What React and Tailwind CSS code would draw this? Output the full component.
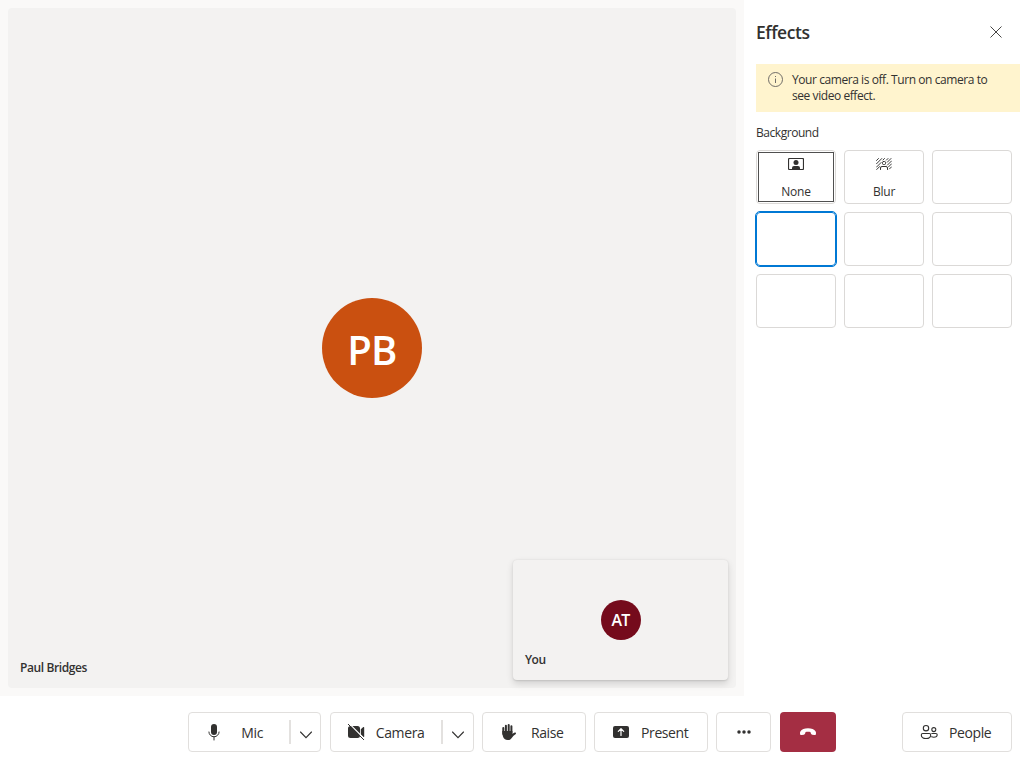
import React from "react";

function Icon({ className = "", children, size = 20 }) {
  return (
    <svg width={size} height={size} viewBox="0 0 20 20" fill="none" className={`block shrink-0 ${className}`}>
      {children}
    </svg>
  );
}

const MicIcon = () => (
  <Icon>
    <rect x="7" y="2" width="6" height="11" rx="3" fill="currentColor" />
    <path d="M4.9 10a5.1 4.8 0 0 0 10.2 0M10 14.8V18" stroke="currentColor" strokeWidth="1" strokeLinecap="round" />
  </Icon>
);

const CameraOffIcon = () => (
  <Icon>
    <path d="M4.500 4H11.500a2.500 2.500 0 0 1 2.500 2.500v7a2.500 2.500 0 0 1-2.500 2.500h-7A2.500 2.500 0 0 1 2 13.500v-7A2.500 2.500 0 0 1 4.500 4ZM14.800 7.200l2.500-2.100c.4-.3.900 0 .900.400v9c0 .5-.5.700-.9.400l-2.500-2.100Z" fill="currentColor" />
    <path d="M3.300 1.700 18.600 17" stroke="white" strokeWidth="1.100" />
    <path d="M2.300 2.300 17.700 17.700" stroke="currentColor" strokeWidth="1" strokeLinecap="round" />
  </Icon>
);

const HandIcon = () => (
  <Icon>
    <path d="M4.300 12V6M6.900 10.500V3.700M9.700 10V2.900M12.400 10.500V4.200" stroke="currentColor" strokeWidth="2" strokeLinecap="round" />
    <path d="M3.300 9h10.100v2.700l1.900-1c.7-.3 1.400-.1 1.600.3.200.5 0 1-.4 1.300l-2 1.500-2 2.400c-1 1.300-2 1.900-3.800 1.900-2.600 0-4-1.500-4.700-3.600-.4-1.300-.6-2.800-.7-5.500Z" fill="currentColor" />
  </Icon>
);

const PresentIcon = () => (
  <Icon>
    <rect x="2" y="4" width="16" height="12" rx="2" fill="currentColor" />
    <path d="M10 13.500V7M7.300 9.300 10 6.600l2.700 2.700" stroke="white" strokeWidth="1.200" strokeLinecap="round" strokeLinejoin="round" />
  </Icon>
);

const PeopleIcon = () => (
  <Icon>
    <g stroke="currentColor" strokeWidth="1.100">
      <circle cx="7" cy="6.200" r="2.700" />
      <circle cx="14.800" cy="7.600" r="2" />
      <path d="M3.700 11.500h6.600c.8 0 1.400.6 1.400 1.400 0 2-1.700 3.600-4.700 3.600s-4.700-1.600-4.700-3.600c0-.8.600-1.400 1.400-1.400Z" />
      <path d="M12.800 11.500h4c.8 0 1.400.6 1.400 1.300 0 1.300-1.200 2.400-3.400 2.400-.9 0-1.600-.1-2.200-.4" strokeLinecap="round" />
    </g>
  </Icon>
);

const NoneIcon = () => (
  <svg width="16" height="12" viewBox="0 0 16 12" fill="none" className="block">
    <rect x=".5" y=".5" width="15" height="11" rx="1" stroke="currentColor" strokeWidth="1.200" />
    <circle cx="8" cy="4.500" r="2.500" fill="currentColor" />
    <path d="M4 11.500V10a2 2 0 0 1 2-2h4a2 2 0 0 1 2 2v1.500Z" fill="currentColor" />
  </svg>
);

const BlurIcon = () => (
  <svg width="16" height="12" viewBox="0 0 16 12" fill="none" stroke="currentColor" strokeLinecap="round" className="block">
    <path d="M.5 2.500 2.500.5M.5 5.800l5.300-5.300M.5 9.100l4.600-4.600M.7 11.500l3-3M7 2 8.500.5M10.400 2.100 12 .5M11.300 4.200 15 .5M11.500 7l4-4M12.500 8.900l3-3M13.500 10.900l2-2" strokeWidth=".95" />
    <rect x="6.500" y="3.500" width="3" height="3" rx="1" strokeWidth="1" />
    <path d="M4.500 11.500V10a1.500 1.500 0 0 1 1.500-1.500h4a1.500 1.500 0 0 1 1.500 1.500v1.500" strokeWidth="1" />
  </svg>
);

const Chevron = () => (
  <svg width="12" height="8" viewBox="0 0 12 8" fill="none" className="block">
    <path d="M.5 1 6 6.700 11.500 1" stroke="currentColor" strokeWidth="1.100" strokeLinecap="round" />
  </svg>
);

function SplitButton({ icon, label, width, labelWidth }) {
  return (
    <div className={`flex h-10 rounded-[4px] border border-[#e1dfdd] bg-white ${width}`}>
      <button className="flex flex-1 items-center pl-[15px]">
        {icon}
        <span className={`text-center ${labelWidth}`}>{label}</span>
      </button>
      <span className="mt-[7px] h-6 w-[2px] bg-[#e3e1df]" />
      <button className="flex w-[29.500px] items-center justify-center pt-[5px] pl-px">
        <Chevron />
      </button>
    </div>
  );
}

function ToolButton({ icon, label, className }) {
  return (
    <button className={`flex h-10 items-center rounded-[4px] border border-[#e1dfdd] bg-white ${className}`}>
      {icon}
      <span>{label}</span>
    </button>
  );
}

function EffectTile({ icon, label, selected, focused }) {
  return (
    <button className={`flex h-[54px] flex-col items-center rounded-[4px] border bg-white ${selected ? "border-[#0078d4] outline-1 outline-[#0078d4]" : "border-[#dbd9d7]"}`}>
      {label && (
        <span className={`flex flex-col items-center ${focused ? "m-px h-[50px] w-[76px] border border-[#505050] pt-[5px]" : "pt-[7px]"}`}>
          {icon}
          <span className="mt-[14px] text-[12px] leading-4 tracking-[-0.200px]">{label}</span>
        </span>
      )}
    </button>
  );
}

export default function App() {
  return (
    <div className="flex h-[768px] w-[1024px] flex-col overflow-hidden bg-white font-['Open_Sans','Noto_Sans',sans-serif] text-[#323130]">
      <div className="flex h-[696px]">
        <main className="w-[744px] bg-[#faf9f8] p-2">
          <section className="relative flex h-[680px] items-center justify-center rounded-[4px] bg-[#f3f2f1]">
            <div className="flex size-[100px] items-center justify-center rounded-full bg-[#ca5010] pt-1 text-[40px] font-semibold tracking-[-0.700px] text-white">PB</div>
            <span className="absolute bottom-3 left-3 text-[12px] leading-4 font-semibold tracking-[-0.400px]">Paul Bridges</span>
            <div className="absolute right-2 bottom-2 flex h-[120px] w-[215px] items-center justify-center rounded-[4px] bg-[#f3f2f1] shadow-[0_3.200px_7.200px_rgba(0,0,0,0.13),0_0.600px_1.800px_rgba(0,0,0,0.11)]">
              <div className="flex size-10 items-center justify-center rounded-full bg-[#750b1c] pb-px text-[16px] font-semibold tracking-[-0.700px] text-white">AT</div>
              <span className="absolute bottom-3 left-3 text-[12px] leading-4 font-semibold tracking-[-0.500px]">You</span>
            </div>
          </section>
        </main>
        <aside className="flex w-[280px] flex-col pl-3">
          <header className="flex h-16 items-center justify-between pr-[22px]">
            <h1 className="text-[17.500px] leading-6 font-semibold tracking-[-0.450px]">Effects</h1>
            <svg width="12" height="12" viewBox="0 0 12 12" fill="none" className="block">
              <path d="m.5.500 11 11m0-11-11 11" stroke="currentColor" strokeWidth=".9" />
            </svg>
          </header>
          <div className="mr-1 flex h-12 bg-[#fff4ce] pt-2 pl-3">
            <svg width="16" height="16" viewBox="0 0 16 16" fill="none" stroke="#605e5c" className="block shrink-0">
              <circle cx="7.500" cy="7.500" r="7" strokeWidth=".9" />
              <path d="M7.500 6.500v4.500M7.500 4v1" strokeWidth=".9" />
            </svg>
            <p className="ml-2 text-[12px] leading-4 tracking-[-0.430px]">Your camera is off. Turn on camera to<br />see video effect.</p>
          </div>
          <h2 className="mt-[13px] text-[12px] leading-4 tracking-[-0.450px]">Background</h2>
          <div className="mt-[9px] mr-3 grid grid-cols-3 gap-2">
            <EffectTile icon={<NoneIcon />} label="None" focused />
            <EffectTile icon={<BlurIcon />} label="Blur" />
            <EffectTile />
            <EffectTile selected />
            <EffectTile />
            <EffectTile />
            <EffectTile />
            <EffectTile />
            <EffectTile />
          </div>
        </aside>
      </div>
      <footer className="flex h-[72px] items-center justify-between pr-3 pl-[187.700px] text-[14px] tracking-[-0.400px]">
        <div className="flex gap-[8.400px]">
          <SplitButton icon={<MicIcon />} label="Mic" width="w-[133.500px]" labelWidth="w-[57px]" />
          <SplitButton icon={<CameraOffIcon />} label="Camera" width="w-[144px]" labelWidth="w-[69px]" />
          <ToolButton icon={<HandIcon />} label="Raise" className="w-[103.700px] gap-3 pl-4" />
          <ToolButton icon={<PresentIcon />} label="Present" className="w-[113.500px] gap-[10.500px] pl-[15.500px]" />
          <button className="flex h-10 w-[55.500px] items-center justify-center rounded-[4px] border border-[#e1dfdd]">
            <Icon>
              <g fill="currentColor"><circle cx="5" cy="10" r="1.750" /><circle cx="10" cy="10" r="1.750" /><circle cx="15" cy="10" r="1.750" /></g>
            </Icon>
          </button>
          <button className="flex h-10 w-14 items-center justify-center rounded-[4px] bg-[#a42e43] text-white">
            <Icon>
              <path d="M10 6.200c3.600 0 6.300 1 7.500 3 .6 1 .7 2 .4 3-.2.700-.8 1-1.500.9l-2.200-.4c-.6-.1-1.100-.5-1.300-1.100l-.5-1.500c-1.500-.6-3.300-.6-4.800 0l-.5 1.500c-.2.600-.7 1-1.300 1.100l-2.200.4c-.7.100-1.300-.2-1.500-.9-.3-1-.2-2 .4-3 1.200-2 3.900-3 7.500-3Z" fill="currentColor" />
            </Icon>
          </button>
        </div>
        <ToolButton icon={<PeopleIcon />} label="People" className="w-[110px] gap-[10px] pl-4" />
      </footer>
    </div>
  );
}
